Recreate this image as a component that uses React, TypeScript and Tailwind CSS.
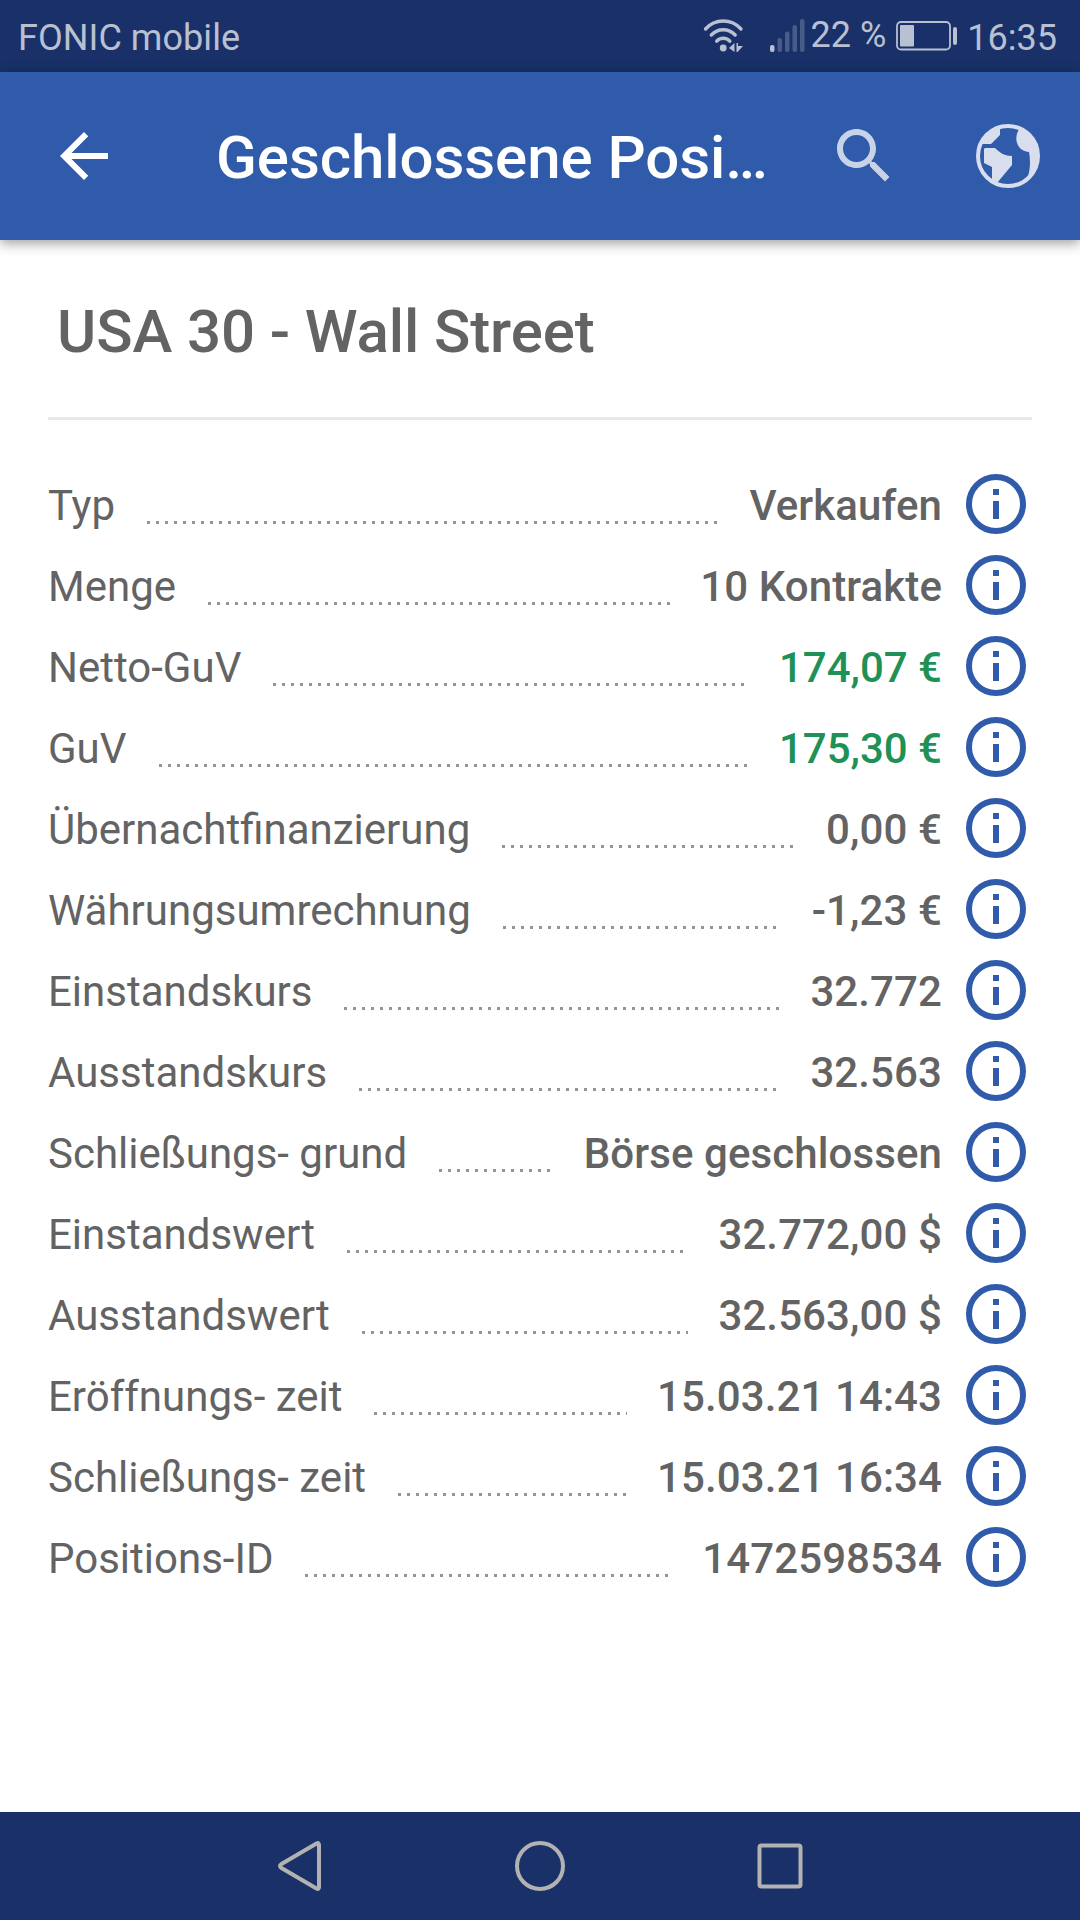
import React from 'react';

const rows = [
  { label: 'Typ', value: 'Verkaufen' },
  { label: 'Menge', value: '10 Kontrakte' },
  { label: 'Netto-GuV', value: '174,07 €', profit: true },
  { label: 'GuV', value: '175,30 €', profit: true },
  { label: 'Übernachtfinanzierung', value: '0,00 €' },
  { label: 'Währungsumrechnung', value: '-1,23 €' },
  { label: 'Einstandskurs', value: '32.772' },
  { label: 'Ausstandskurs', value: '32.563' },
  { label: 'Schließungs- grund', value: 'Börse geschlossen' },
  { label: 'Einstandswert', value: '32.772,00 $' },
  { label: 'Ausstandswert', value: '32.563,00 $' },
  { label: 'Eröffnungs- zeit', value: '15.03.21 14:43' },
  { label: 'Schließungs- zeit', value: '15.03.21 16:34' },
  { label: 'Positions-ID', value: '1472598534' },
];

function StatusBar() {
  return (
    <div className="flex h-[72px] items-center bg-[#193168] pl-[18px] pr-[23px] text-[36px] leading-[42px] text-[#b9c0d2]">
      <span className="flex-1 pt-[4px] tracking-[0.06px]">FONIC mobile</span>
      {/* Wifi */}
      <svg className="h-[36px] w-[42px]" viewBox="0 0 42 36" fill="none" stroke="currentColor">
        <path d="M2.5 11C12 .3 28.500 .3 38 11" strokeWidth="3.400" strokeLinecap="round" />
        <path d="M8.300 17C15 10 25.500 10 32.200 17" strokeWidth="3.400" strokeLinecap="round" />
        <path d="M13.700 23.200C17 19.300 23.500 19.300 26.800 23.200" strokeWidth="3.400" strokeLinecap="round" />
        <circle cx="20.200" cy="30" r="3.400" fill="currentColor" stroke="none" />
        <path d="M26 30L31.500 25V34ZM33.500 25H35V28H40L34.500 34H33.500Z" fill="currentColor" stroke="none" />
      </svg>
      {/* Signal */}
      <svg className="-mt-[2px] ml-[25px] h-[36px] w-[36px]" viewBox="0 0 36 36" fill="currentColor">
        <rect x="0" y="28" width="4.500" height="7" rx="2" />
        <g opacity="0.3">
          <rect x="7.500" y="21" width="4.500" height="14" rx="2" />
          <rect x="15" y="14.500" width="4.500" height="20.500" rx="2" />
          <rect x="22.500" y="8" width="4.500" height="27" rx="2" />
          <rect x="30" y="2" width="4.500" height="33" rx="2" />
        </g>
      </svg>
      <span className="ml-[5px] pb-[2px]">22 %</span>
      <svg className="ml-[10px] h-[30px] w-[62px]" viewBox="0 0 62 30" fill="none">
        <rect x="1" y="1" width="53" height="27.500" rx="4" stroke="currentColor" strokeWidth="1.800" />
        <rect x="4" y="4" width="14" height="21.500" rx="1" fill="currentColor" />
        <rect x="57" y="6" width="4" height="18" rx="2" fill="currentColor" />
      </svg>
      <span className="ml-[9px] pt-[4px]">16:35</span>
    </div>
  );
}

function AppBar() {
  return (
    <header className="relative flex h-[168px] items-center bg-[#305aaa] pl-[48px] pr-[39px] shadow-[0_3px_12px_rgba(0,0,0,0.4)]">
      <svg className="h-[72px] w-[72px] text-white" viewBox="0 0 24 24" fill="currentColor">
        <path d="M20 11H7.830l5.590-5.590L12 4l-8 8 8 8 1.410-1.410L7.830 13H20v-2z" />
      </svg>
      <h1 className="ml-[96px] w-[570px] truncate pt-[4px] text-[60px] font-medium leading-[72px] tracking-[-0.06px] text-white">
        Geschlossene Posi…
      </h1>
      <svg className="ml-[42px] h-[72px] w-[72px] text-[#c9d3e8]" viewBox="0 0 24 24" fill="currentColor">
        <path d="M15.500 14h-.790l-.280-.270C15.410 12.590 16 11.110 16 9.500 16 5.910 13.090 3 9.500 3S3 5.910 3 9.500 5.910 16 9.500 16c1.610 0 3.090-.590 4.230-1.570l.270.280v.790l5 4.990L20.490 19l-4.990-5zm-6 0C7.010 14 5 11.990 5 9.500S7.010 5 9.500 5 14 7.010 14 9.500 11.990 14 9.500 14z" />
      </svg>
      {/* Globe */}
      <svg className="ml-auto h-[66px] w-[66px] text-[#d8deed]" viewBox="0 0 66 66">
        <circle cx="33" cy="33" r="30" fill="none" stroke="currentColor" strokeWidth="4" />
        <path d="M6 21H16L25 12V4C16 6 9 12 6 21ZM10 25H20C25 30 30 33 37 33V42L22 60L17 58V44L9 40V26ZM45 5C38 14 41 28 54 29C55.500 37 55.500 46 52.500 55C69 41 67 14 45 5Z" fill="currentColor" />
      </svg>
    </header>
  );
}

function InfoIcon() {
  return (
    <svg className="h-[72px] w-[72px] text-[#305aaa]" viewBox="0 0 24 24" fill="none">
      <circle cx="12" cy="12" r="9" stroke="currentColor" strokeWidth="2" />
      <path d="M11 7h2v2h-2zM11 11h2v6h-2z" fill="currentColor" />
    </svg>
  );
}

function DetailRow({ label, value, profit }: { label: string; value: string; profit?: boolean }) {
  return (
    <div className="flex h-[81px] items-start text-[42px] leading-[50px] text-[#636363]">
      <span className="mt-[13px]">{label}</span>
      <span className="ml-[32px] mr-[30px] mt-[53px] h-[3px] flex-1 bg-[linear-gradient(90deg,#959595_3px,transparent_3px)] bg-[length:9px_3px]" />
      <span className={profit ? 'mt-[13px] font-medium text-[#1f9157]' : 'mt-[13px] font-medium tracking-[0.1px]'}>
        {value}
      </span>
      <span className="ml-[18px]">
        <InfoIcon />
      </span>
    </div>
  );
}

function NavBar() {
  return (
    <nav className="flex h-[108px] items-center justify-center gap-[180px] bg-[#193168] text-[#b2b2b2]">
      <svg className="h-[60px] w-[60px]" viewBox="0 0 60 60" fill="none" stroke="currentColor" strokeWidth="4">
        <path d="M49 9V51Q49 54 46.500 52.500L11.500 32Q8.500 30 11.500 28L46.500 7.500Q49 6 49 9Z" />
      </svg>
      <svg className="h-[60px] w-[60px]" viewBox="0 0 60 60" fill="none" stroke="currentColor" strokeWidth="4">
        <circle cx="30" cy="30" r="23" />
      </svg>
      <svg className="h-[60px] w-[60px]" viewBox="0 0 60 60" fill="none" stroke="currentColor" strokeWidth="4">
        <rect x="9.500" y="9.500" width="41" height="41" rx="2" />
      </svg>
    </nav>
  );
}

export default function App() {
  return (
    <div className="flex h-[1920px] w-[1080px] flex-col overflow-hidden bg-white font-[Roboto,sans-serif]">
      <StatusBar />
      <AppBar />
      <main className="flex-1 px-[48px] pt-[56px]">
        <h2 className="px-[9px] text-[60px] font-medium leading-[72px] tracking-[-0.1px] text-[#636363]">
          USA 30 - Wall Street
        </h2>
        <hr className="mb-[48px] mt-[49px] border-0 border-t-[3px] border-[#e8e8e8]" />
        {rows.map((row) => (
          <DetailRow key={row.label} {...row} />
        ))}
      </main>
      <NavBar />
    </div>
  );
}
